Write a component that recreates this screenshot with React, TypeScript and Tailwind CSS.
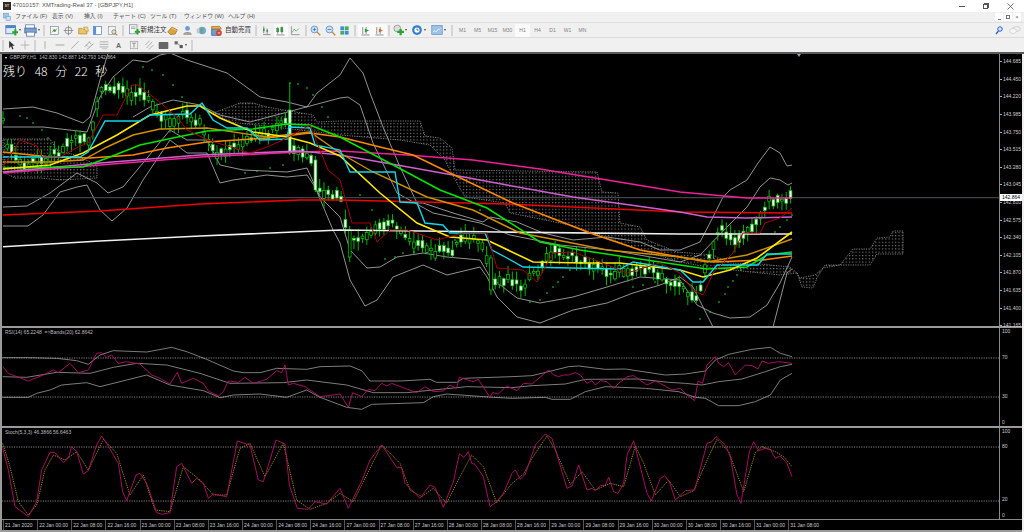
import React from "react";

type P = [number, number];
const s = (str: string): P[] =>
  str.trim().split(/\s+/).map((t) => {
    const [a, b] = t.split(",").map(Number);
    return [a, b] as P;
  });
const toStr = (p: P[]) => p.map(([x, y]) => `${x},${y}`).join(" ");
const z = (str: string, ox: number, oy: number): P[] => s(str).map(([x, y]) => [ox + x / 3, oy + y / 3] as P);

// ---------- main chart series (screen coordinates) ----------
const white = s("3,246.7 100,241 200,236 340,230 500,232 680,234 792,234");
const red = s("3,215 100,211 200,204 300,200 340,200 507,204 680,212 792,213");
const magenta = s("3,173 100,165 200,157 300,152 340,151 407,155 473,160 540,169 607,180 680,192 713,195 747,198 792,198");
const orchid = s("3,172 100,163 200,155 300,151 340,155 397,165 453,175 507,185 573,197 680,212 707,217 747,218 792,217");
const orange = s("3,152 50,157 90,158 133,155 167,148 207,142 267,138 310,133 340,137 380,147 413,155 450,173 513,203 590,233 640,250 680,257 713,262 763,260 792,256");
const darkOrange = s("3,162 50,162 83,160 107,147 133,135 160,129 207,128 267,137 310,132 340,153 373,172 427,197 473,210 520,233 557,240 607,250 680,257 707,262 747,255 792,239");
const green = s("3,168 83,167 110,157 140,145 173,138 207,131 253,129 287,124 310,125 340,137 397,167 440,190 487,208 540,242 580,250 633,258 680,265 707,269 747,267 767,255 792,252");
const yellow = s("3,169 50,165 83,153 117,135 150,115 187,106 200,106 220,118 253,132 287,137 310,143 340,156 380,193 417,223 450,237 487,240 533,262 583,263 620,263 680,270 703,277 730,270 757,258 792,232");
const cyan = s("3,157 80,157 88,152 105,121 140,121 150,115 190,114 202,103 213,120 227,128 247,128 260,140 287,139 289,127 310,128 315,145 340,150 350,172 395,172 400,202 417,203 425,223 443,225 450,233 485,233 492,250 507,258 523,267 620,269 633,262 680,270 693,282 703,282 717,265 758,265 767,254 792,254");
const darkRed = s("3,167 20,140 37,146 42,157 60,157 80,146 88,143 103,115 117,115 132,85 138,85 157,100 177,117 187,130 208,140 250,153 267,147 287,138 310,125 328,170 340,180 352,223 370,223 377,242 390,230 407,230 437,240 463,233 487,233 497,268 523,270 537,282 553,253 573,252 600,262 627,273 660,263 680,273 693,290 703,295 713,273 733,253 743,233 760,233 765,223 780,218 792,208");

const bands: P[][] = [
  s("3,109 33,107 57,113 83,123 90,117 100,80 108,53"),
  s("3,127 43,127 87,132 100,97 113,77 133,60 147,62 160,55 170,53 187,60 227,73 260,97 287,102 307,107 317,93 340,75 350,58 363,73 370,93 383,127 400,167 417,203 423,203 453,213 483,222 490,217 517,222 543,233 573,240 607,237 640,242 660,250 680,250 700,242 713,217 723,197 730,190 747,180 758,163 770,147 780,153 787,166 792,165"),
  s("133,117 150,107 173,100 200,105 220,115 250,122 340,98 348,97 360,105 373,143 397,193 433,213 480,223 510,235 560,245 610,250 680,262 700,255 727,227 747,207 760,187 770,178 780,180 788,185 792,183"),
  s("3,207 27,206 50,193 77,173 97,183 108,193 123,187 143,163 170,130 187,140 207,140 220,165 243,170 287,172 307,168 320,197 340,217 350,250 367,268 380,267 397,257 423,253 447,257 480,260 490,277 517,298 540,303 573,297 607,287 640,277 680,280 697,305 713,313 730,318 750,317 767,305 780,283 792,257"),
  s("3,226 28,226 43,215 60,192 77,187 87,185 100,210 112,221 127,208 143,180 170,140 187,153 207,153 220,183 233,180 267,175 287,177 307,175 315,187 333,230 340,243 350,280 365,306 377,300 393,277 423,265 447,275 480,267 487,277 497,297 517,317 540,323 573,310 607,303 633,293 660,285 680,277 693,287 713,327"),
  s("773,327 787,273 792,269"),
];

const anchors = s("3,123 7,143 12,152 23,167 40,160 57,153 73,137 90,140 100,90 107,90 118,90 127,93 140,93 148,100 160,113 173,123 182,113 200,123 208,143 217,157 230,147 253,140 277,130 288,117 293,150 310,157 315,177 320,193 340,197 350,243 363,240 373,232 387,220 403,232 417,245 433,252 453,250 463,235 480,242 488,267 493,283 510,277 520,287 537,273 553,250 587,263 613,273 643,267 673,282 690,293 697,302 707,263 720,225 732,242 743,233 758,223 767,200 792,198");
const lerp = (x: number) => {
  for (let i = 0; i < anchors.length - 1; i++) {
    const [a, b] = anchors[i];
    const [c, d] = anchors[i + 1];
    if (x >= a && x <= c) return b + ((d - b) * (x - a)) / (c - a);
  }
  return anchors[anchors.length - 1][1];
};
const rnd = (n: number) => {
  const v = Math.sin(n * 12.9898) * 43758.5453;
  return v - Math.floor(v);
};
const candles = Array.from({ length: 185 }, (_, i) => {
  const x = 3 + i * 4.28;
  const c = lerp(x) + (rnd(i) - 0.5) * 7;
  const h = 1.5 + rnd(i + 300) * 7;
  let top = c - h / 2;
  let bottom = c + h / 2;
  let wt = top - 1 - rnd(i + 600) * 9;
  let wb = bottom + 1 + rnd(i + 900) * 9;
  if (Math.abs(x - 288) < 2.2) { top = 110; bottom = 153; wt = 83; wb = 155; }
  if (Math.abs(x - 314) < 2.2) { top = 160; bottom = 190; wt = 156; wb = 192; }
  if (Math.abs(x - 348) < 2.2) { top = 230; bottom = 257; wt = 226; wb = 262; }
  if (Math.abs(x - 489) < 2.2) { top = 258; bottom = 290; wt = 255; wb = 295; }
  return { x, top, bottom, wt, wb, white: rnd(i + 1200) > 0.42 };
});

const sar = s("20,116 27,118 33,123 42,130 48,138 143,67 152,70 163,75 173,85 182,97 187,104 245,173 257,171 270,168 283,165 290,83 298,84 307,88 313,95 322,107 328,117 360,195 372,210 385,259 395,257 403,253 414,252 455,240 480,210 530,302 540,300 547,293 553,287 558,282 563,277 570,270 633,287 643,285 655,282 700,319 710,312 719,302 725,294 728,287 733,281 737,275 741,270 775,232 780,227 787,220 792,215");

const clouds = [
  "3,139 50,139 57,150 75,155 97,165 97,178 60,180 40,178 15,178 3,172",
  "213,113 240,103 253,103 267,107 313,115 317,122 340,121 400,121 420,121 425,136 440,138 452,148 455,170 597,172 602,192 618,193 620,223 640,227 647,240 677,252 713,255 730,263 760,264 790,267 797,273 780,275 713,268 680,262 640,250 600,235 570,225 510,213 505,203 465,197 455,180 445,160 430,145 400,140 340,135 300,130 230,122",
  "797,273 802,287 813,288 817,278 825,265 840,265 823,268 815,275 800,278",
  "840,265 853,249 870,249 877,238 890,237 893,231 903,231 903,254 877,254 870,265",
];

// ---------- sub windows ----------
const rsi = [
  ...z("8,140 25,160 85,183 130,165 160,150 175,158 210,130 235,158 265,150 290,100 305,98 320,112 335,105 355,130 380,125 420,132 455,165 480,175 510,192 532,157 545,190 580,175 610,190 625,213 655,228 670,215 685,183 715,187 735,172 760,190 800,178 830,152 845,158 855,135 865,195 880,190 915,200 960,230 1020,222 1045,262 1058,218 1085,230 1105,208 1125,212 1145,190 1160,198 1175,190 1215,205 1250,218 1275,200 1300,215 1330,213 1350,195 1370,205 1378,172 1420,185 1435,178 1470,232 1478,218 1495,222 1520,198 1536,205", 0, 320),
  ...z("15,212 35,190 60,192 110,150 125,165 140,170 155,165 170,165 190,158 205,165 225,190 240,182 250,195 265,182 285,185 305,205 320,190 345,170 365,167 405,195 430,183 445,190 480,210 505,205 525,225 548,242 558,183 572,190 585,135 610,110 620,130 635,140 650,128 670,165 700,135 720,137 738,147 750,123 770,130 800,125 840,130", 512, 320),
];
const rsiBands = [
  [...z("8,113 85,113 170,115 230,122 265,133 300,105 340,92 440,96 515,82 560,95 620,118 700,153 730,158 780,158 830,145 920,148 960,140 1050,138 1085,152 1110,183 1200,183 1290,178 1310,187 1370,187 1390,175 1536,170", 0, 320), ...z("60,167 170,140 200,138 280,148 340,147 460,165 520,162 580,153 610,120 650,103 720,88 775,82 805,100 840,110", 512, 320)],
  [...z("8,170 80,172 170,157 270,160 340,142 410,130 500,135 600,160 690,190 850,188 920,180 1040,195 1120,218 1220,218 1400,200 1536,203", 0, 320), ...z("60,197 160,192 220,178 380,177 470,187 520,190 570,195 620,185 690,177 760,155 805,140 840,133", 512, 320)],
  [...z("8,232 85,232 110,220 150,210 185,195 260,188 300,200 380,180 440,165 510,195 610,212 660,233 700,225 780,222 860,232 920,210 960,232 1040,262 1085,268 1115,253 1270,248 1300,230 1340,222 1480,232 1536,235", 0, 320), ...z("100,232 120,238 175,238 220,215 280,200 400,205 500,215 550,232 580,235 620,257 680,257 730,245 775,225 805,180 840,160", 512, 320)],
];
const stochK = [
  ...z("8,385 25,450 45,560 85,590 110,545 125,450 150,397 165,398 190,428 205,415 215,380 230,395 250,462 265,452 290,375 305,348 320,370 355,430 368,515 380,542 408,465 420,460 440,490 470,578 485,583 510,578 530,440 545,430 575,490 590,475 610,490 625,535 640,522 680,530 712,363 750,375 775,480 790,485 828,360 855,372 868,495 892,565 925,568 945,545 980,552 1020,505 1045,565 1085,483 1110,420 1145,375 1190,442 1205,443 1215,490 1260,535 1290,495 1305,502 1330,562 1360,485 1378,402 1392,412 1405,395 1415,430 1425,433 1450,470 1470,560 1490,545 1510,520 1536,460", 0, 320),
  ...z("10,450 25,478 40,462 70,375 100,342 120,355 165,505 180,498 200,435 225,510 240,505 250,512 265,497 280,495 290,472 305,515 318,520 335,490 345,405 365,362 405,520 418,543 445,475 458,467 472,485 490,540 520,512 548,510 585,370 600,365 612,350 640,375 655,410 675,525 687,550 712,395 725,365 740,392 760,385 775,388 790,415 805,408 825,430 840,470", 512, 320),
];
const stochD = [
  ...z("8,370 30,440 55,545 85,585 110,555 135,450 160,405 195,420 230,395 265,450 310,358 350,400 390,525 430,465 465,570 510,575 550,440 600,480 640,525 680,525 720,385 750,370 795,470 850,370 890,540 930,568 980,550 1020,520 1060,545 1100,465 1145,375 1200,430 1230,510 1265,530 1300,505 1340,550 1375,480 1415,405 1450,440 1490,548 1536,490", 0, 320),
  ...z("35,462 60,415 105,348 130,390 175,493 210,455 250,510 295,490 335,500 370,378 395,430 430,525 470,480 505,530 545,512 590,410 615,358 650,395 695,515 730,398 750,380 790,395 815,410 840,440", 512, 320),
];

const priceLabels = ["144.685", "144.450", "144.220", "143.985", "143.750", "143.515", "143.280", "143.045", "142.810", "142.575", "142.340", "142.105", "141.870", "141.635", "141.400", "141.165"];
const timeLabels = ["21 Jan 2020", "22 Jan 00:00", "22 Jan 08:00", "22 Jan 16:00", "23 Jan 00:00", "23 Jan 08:00", "23 Jan 16:00", "24 Jan 00:00", "24 Jan 08:00", "24 Jan 16:00", "27 Jan 00:00", "27 Jan 08:00", "27 Jan 16:00", "28 Jan 00:00", "28 Jan 08:00", "28 Jan 16:00", "29 Jan 00:00", "29 Jan 08:00", "29 Jan 16:00", "30 Jan 00:00", "30 Jan 08:00", "30 Jan 16:00", "31 Jan 00:00", "31 Jan 08:00"];

// ---------- icons ----------
const Ic = ({ children, w = 11 }: { children: React.ReactNode; w?: number }) => (
  <svg width={w} height={w} viewBox="0 0 16 16" className="shrink-0">{children}</svg>
);
const Arrow = () => <span className="ml-[1px] h-0 w-0 border-x-[1.5px] border-t-[2px] border-x-transparent border-t-[#444]" />;
const Plus = ({ c = "#22a82a" }: { c?: string }) => <path d="M9 9h2.5V6.5h2.5V9H16.500v2.500H14V14h-2.500v-2.500H9z" fill={c} />;
const NewChart = () => <Ic w={13}><rect x="1" y="2" width="12" height="10" fill="#dfe8f5" stroke="#4a78b5" /><rect x="1" y="2" width="12" height="3" fill="#4a86c8" /><Plus /></Ic>;
const Profile = () => <Ic w={13}><rect x="2" y="1" width="11" height="5" fill="#fff" stroke="#5b7fb0" /><rect x="1" y="5" width="14" height="6" fill="#7ea2d0" stroke="#49699a" /><rect x="3" y="10" width="10" height="5" fill="#fff" stroke="#5b7fb0" /></Ic>;
const Props = () => <Ic><rect x="2" y="2" width="12" height="12" fill="#f6f6f6" stroke="#7b8ca8" /><path d="M4 11l3-4 2 2 3-4" stroke="#c83" fill="none" /><circle cx="8" cy="8" r="2" fill="#3a9a52" /></Ic>;
const Cross = () => <Ic><circle cx="8" cy="8" r="5" fill="none" stroke="#777" /><path d="M8 1v14M1 8h14" stroke="#777" /></Ic>;
const Folder = () => <Ic><path d="M1 5h5l1 1h6v7H1z" fill="#edc660" stroke="#a9863a" /><path d="M8 3h6l1 6h-4z" fill="#f5dc90" stroke="#b39550" /></Ic>;
const Win = () => <Ic><rect x="2" y="2" width="12" height="12" fill="#fff" stroke="#4a78b5" /><rect x="2" y="2" width="4" height="12" fill="#5c90d0" /></Ic>;
const Print = () => <Ic><rect x="2" y="2" width="10" height="12" fill="#f4f4f4" stroke="#999" /><circle cx="10" cy="10" r="3" fill="#e9e4c0" stroke="#667" /><path d="M12 12l3 3" stroke="#b08030" strokeWidth="1.500" /></Ic>;
const Order = () => <Ic w={12}><rect x="2" y="1" width="10" height="12" fill="#f6f6f6" stroke="#7e8a99" /><path d="M4 4h6M4 6h6" stroke="#8a99aa" /><Plus /></Ic>;
const Gold = () => <Ic><path d="M1 10l6-7 8 4-3 6-7 1z" fill="#d9a53f" stroke="#9b6f20" /><path d="M6 4l8 4" stroke="#f5d682" /></Ic>;
const People = () => <Ic><circle cx="8" cy="5" r="3.500" fill="#6a9ad8" /><path d="M2 13c0-4 12-4 12 0v1H2z" fill="#6a9ad8" /><rect x="3" y="12" width="10" height="2" fill="#d6a050" /></Ic>;
const Globe = () => <Ic><circle cx="9" cy="8" r="5.500" fill="#6fa8c8" /><path d="M7 4l3 2-2 3 2 3-3-1z" fill="#5ca060" /><rect x="1" y="5" width="4" height="7" fill="#c5c9ce" /></Ic>;
const Expert = () => <Ic w={13}><path d="M2 6h10v8H2z" fill="#6f9ccc" stroke="#44709e" /><path d="M2 3h10l2 3H2z" fill="#e8b14c" stroke="#a9781f" /><circle cx="11" cy="11" r="3.500" fill="#d63c30" /><path d="M9.500 11h3" stroke="#fff" /></Ic>;
const Bars = ({ c = "#3a8a52" }: { c?: string }) => <Ic><path d="M4 2v10M9 5v8M3 14h11" stroke="#666" /><rect x="3" y="5" width="2.200" height="4" fill={c} /><rect x="8" y="7" width="2.200" height="3" fill={c} /></Ic>;
const Candle = () => <Ic><path d="M4 3v10M10 2v11M2 14.500h12" stroke="#666" /><rect x="2.500" y="5" width="3" height="5" fill="#2f9c40" stroke="#1e6e2e" strokeWidth=".5" /><rect x="8.500" y="4" width="3" height="6" fill="#2f9c40" stroke="#1e6e2e" strokeWidth=".5" /></Ic>;
const LineC = () => <Ic><path d="M2 2v12h12" stroke="#777" fill="none" /><path d="M3 11l3-5 3 3 4-4" stroke="#3c9a66" fill="none" /></Ic>;
const ZoomI = ({ plus }: { plus?: boolean }) => <Ic><circle cx="6.500" cy="6.500" r="5" fill="#c9e0f5" stroke="#4d7fb4" /><path d="M10 10l5 5" stroke="#c08a30" strokeWidth="2" /><path d={plus ? "M4 6.500h5M6.500 4v5" : "M4 6.500h5"} stroke="#2c6fb0" /></Ic>;
const Tile = () => <Ic><rect x="2" y="2" width="5.500" height="5.500" fill="#3c8ed8" /><rect x="8.500" y="2" width="5.500" height="5.500" fill="#46ab5e" /><rect x="2" y="8.500" width="5.500" height="5.500" fill="#46ab5e" /><rect x="8.500" y="8.500" width="5.500" height="5.500" fill="#3c8ed8" /></Ic>;
const BarPlay = ({ c }: { c: string }) => <Ic><path d="M4 3v10M9 3v10M2 14.500h12" stroke="#666" /><path d="M7 5l6 3-6 3z" fill={c} /></Ic>;
const Ind = () => <Ic w={12}><circle cx="7" cy="6" r="4.500" fill="#ddd" stroke="#888" /><path d="M7 9h3V6.500h3V9h3v3h-3v3h-3v-3H7z" fill="#22a82a" /></Ic>;
const Clock = () => <Ic w={12}><circle cx="8" cy="8" r="6.500" fill="#2f7fd0" /><circle cx="8" cy="8" r="3.500" fill="#fff" /><path d="M8 6v2h2" stroke="#333" fill="none" /></Ic>;
const Tmpl = () => <Ic w={12}><rect x="1" y="2" width="14" height="12" fill="#9cc2ea" stroke="#6d95c6" /><path d="M3 11c2-5 3 2 5-2s3 0 5-3" stroke="#fff" fill="none" /></Ic>;
const Pointer = () => <Ic w={10}><path d="M5 1v12l3-3 2 5 2-1-2-5h4z" fill="#333" /></Ic>;
const CrossT = () => <Ic w={10}><path d="M8 1v14M1 8h14" stroke="#999" /></Ic>;
const VLine = () => <Ic w={10}><path d="M8 2v12" stroke="#888" /></Ic>;
const HLine = () => <Ic w={10}><path d="M1 8h14" stroke="#777" /></Ic>;
const Trend = () => <Ic w={10}><path d="M2 14L14 2" stroke="#888" /></Ic>;
const Channel = () => <Ic w={10}><path d="M1 11L10 2M5 15l10-9" stroke="#777" /><path d="M3 7l4 4M8 3l4 4" stroke="#999" /></Ic>;
const Fib = () => <Ic w={10}><path d="M1 3h14M1 7h14M1 11h14" stroke="#888" /><path d="M5 14h8" stroke="#aaa" /></Ic>;
const TBox = () => <Ic w={10}><rect x="2" y="2" width="12" height="12" fill="#eee" stroke="#999" /><path d="M5 5h6M8 5v7" stroke="#666" /></Ic>;
const Arrows = () => <Ic w={10}><path d="M2 8L9 1M4 13L13 3M8 15l7-7" stroke="#888" /></Ic>;
const RectI = () => <Ic w={11}><rect x="1" y="3" width="14" height="10" rx="1" fill="#666" /></Ic>;
const Shapes = () => <Ic w={10}><rect x="1" y="2" width="5" height="5" fill="#666" /><rect x="9" y="8" width="5" height="5" fill="#555" /><path d="M6 6l4 3" stroke="#555" /></Ic>;

const Sep = ({ w = 6 }: { w?: number }) => (
  <div className="flex h-full shrink-0 items-center justify-center" style={{ width: w }}>
    <div className="h-[11px] w-[2px] bg-[#d4d4d4]" />
  </div>
);
const B = ({ children, w = 14.5, active }: { children: React.ReactNode; w?: number; active?: boolean }) => (
  <div className={`flex h-[13px] shrink-0 items-center justify-center ${active ? "bg-[#fafafa]" : ""}`} style={{ width: w }}>
    {children}
  </div>
);

const jp = "font-['Liberation_Sans','Noto_Sans_CJK_JP',sans-serif]";

export default function App() {
  const menu: [string, number][] = [
    ["ファイル (F)", 27], ["表示 (V)", 22], ["挿入 (I)", 19], ["チャート (C)", 27], ["ツール (T)", 24], ["ウィンドウ (W)", 34], ["ヘルプ (H)", 26],
  ];
  const mas: [P[], string, number][] = [
    [white, "#f0f0f0", 1.6], [red, "#f00000", 1.6], [magenta, "#f0209a", 1.6], [orchid, "#d060d0", 1.5], [orange, "#ff8800", 1.6], [darkOrange, "#d09000", 1.4], [green, "#00e800", 1.5], [yellow, "#ffe800", 1.6], [cyan, "#10d8e8", 1.4], [darkRed, "#a80000", 1],
  ];
  return (
    <div className={`flex h-[532px] w-[1024px] flex-col overflow-hidden bg-[#f0f0f0] ${jp} text-[6px] leading-none text-[#444]`}>
      {/* title bar */}
      <div className="flex h-[12px] shrink-0 items-center bg-white pl-[3px]">
        <div className="flex h-[8px] w-[8px] items-center justify-center bg-[#2a2a2a] text-[3px] font-bold text-[#e8c070]">MT</div>
        <span className="ml-[1.500px] text-[5.900px] text-[#555]">47010157: XMTrading-Real 37 - [GBPJPY,H1]</span>
        <div className="ml-auto flex items-center">
          <div className="h-[1px] w-[6px] bg-[#555]" />
          <div className="relative ml-[18px] h-[5px] w-[5px] border border-[#555] after:absolute after:-right-[2px] after:-top-[2px] after:h-[5px] after:w-[5px] after:border-r after:border-t after:border-[#555]" />
          <svg width="7" height="7" viewBox="0 0 7 7" className="ml-[19px] mr-[10px]"><path d="M0.500 0.500l6 6M6.500 0.500l-6 6" stroke="#555" strokeWidth=".8" /></svg>
        </div>
      </div>
      {/* menu */}
      <div className="flex h-[11px] shrink-0 items-center border-b border-[#e0e0e0]">
        <svg width="8" height="8" viewBox="0 0 16 16" className="ml-[3px] mr-[4px]"><rect x="1" y="1" width="10" height="9" fill="#a6c4e8" stroke="#5a8bc5" /><rect x="6" y="7" width="9" height="8" fill="#cfe0f5" stroke="#5a8bc5" /></svg>
        <div className="flex gap-[10px] text-[5.800px] text-[#555]">
          {menu.map(([t, w]) => (
            <span key={t} className="whitespace-nowrap" style={{ width: w }}>{t}</span>
          ))}
        </div>
        <div className="ml-auto mr-[3px] flex gap-[1px]">
          <div className="flex h-[8px] w-[8px] items-end justify-center bg-white pb-[1px]"><div className="h-px w-[3px] bg-[#777]" /></div>
          <div className="flex h-[8px] w-[8px] items-center justify-center bg-white"><div className="h-[4px] w-[4px] border border-[#777]" /></div>
          <div className="flex h-[8px] w-[8px] items-center justify-center bg-white text-[6px] text-[#777]">×</div>
        </div>
      </div>
      {/* toolbar 1 */}
      <div className="flex h-[15px] shrink-0 items-center border-b border-[#dcdcdc] pl-[3px]">
        <B w={19}><NewChart /><Arrow /></B>
        <B w={19}><Profile /><Arrow /></B>
        <Sep w={6} />
        <B><Props /></B><B><Cross /></B><B><Folder /></B><B><Win /></B><B><Print /></B>
        <Sep w={6} />
        <div className="flex h-[13px] w-[40px] shrink-0 items-center gap-[1px] pl-[2px] text-[6.500px] text-[#333]"><Order /><span className="whitespace-nowrap">新規注文</span></div>
        <B><Gold /></B><B><People /></B><B><Globe /></B>
        <div className="flex h-[13px] w-[44px] shrink-0 items-center gap-[2px] pl-[1px] text-[6.500px] text-[#333]"><Expert /><span className="whitespace-nowrap">自動売買</span></div>
        <Sep w={6} />
        <B><Bars /></B><B active><Candle /></B><B><LineC /></B>
        <Sep w={6} />
        <B><ZoomI plus /></B><B><ZoomI /></B><B><Tile /></B>
        <Sep w={6} />
        <B active><BarPlay c="#2f9c40" /></B><B active><BarPlay c="#d06a30" /></B>
        <Sep w={3} />
        <B w={18}><Ind /><Arrow /></B><B w={20}><Clock /><Arrow /></B><B w={20}><Tmpl /><Arrow /></B>
        <Sep w={7} />
        <div className="flex text-[5px] text-[#808080]">
          {["M1", "M5", "M15", "M30", "H1", "H4", "D1", "W1", "MN"].map((t) => (
            <div key={t} className={`flex h-[13px] w-[15px] items-center justify-center ${t === "H1" ? "bg-[#fafafa]" : ""}`}>{t}</div>
          ))}
        </div>
        <div className="ml-auto mr-[3px] flex items-center gap-[6px]">
          <svg width="8" height="9" viewBox="0 0 16 18"><circle cx="10" cy="6" r="4.500" fill="#dbe8fa" stroke="#2a60c8" strokeWidth="2" /><path d="M7 10l-5 6" stroke="#2a60c8" strokeWidth="2.500" /></svg>
          <svg width="12" height="9" viewBox="0 0 24 18"><ellipse cx="15" cy="6" rx="8" ry="5" fill="#eee" stroke="#bbb" /><ellipse cx="8" cy="10" rx="7" ry="5" fill="#f6f6f6" stroke="#bbb" /></svg>
        </div>
      </div>
      {/* toolbar 2 */}
      <div className="flex h-[14px] shrink-0 items-center pl-[1px]">
        <Sep w={4} />
        <B w={12}><Pointer /></B>
        <B w={16}><CrossT /></B>
        <Sep w={4} />
        <B w={15}><VLine /></B><B w={15}><HLine /></B><B w={15}><Trend /></B><B w={14}><Channel /></B><B w={15}><Fib /></B>
        <B w={15}><span className="text-[7px] font-bold text-[#666]">A</span></B>
        <B w={15}><TBox /></B><B w={15}><Arrows /></B><B w={14}><RectI /></B>
        <B w={20}><Shapes /><Arrow /></B>
        <Sep w={4} />
      </div>
      {/* chart window */}
      <div className="flex min-h-0 flex-1 flex-col">
        <div className="h-[2px] shrink-0 bg-[#5a5a5a]" />
        <div className="flex h-[478px] shrink-0 pr-[2px]">
          <div className="w-[2px] shrink-0 bg-[#9a9a9a]" />
          <div className="flex min-w-0 flex-1 flex-col">
            {/* main */}
            <div className="relative flex h-[272px] shrink-0 bg-black">
              <svg width="997" height="272" viewBox="2 54 997 272" className="shrink-0">
                <defs>
                  <pattern id="dots" width="3.300" height="3.300" patternUnits="userSpaceOnUse">
                    <rect x="1" y="1" width="0.900" height="0.900" fill="#c8c8c8" />
                  </pattern>
                </defs>
                {clouds.map((c, i) => (
                  <polygon key={i} points={c} fill="url(#dots)" stroke="#aaa" strokeWidth=".7" strokeDasharray="1.200 1.200" />
                ))}
                {bands.map((b, i) => (
                  <polyline key={i} points={toStr(b)} fill="none" stroke="#b8b8b8" strokeWidth=".8" />
                ))}
                <line x1="2" y1="197.700" x2="999" y2="197.700" stroke="#4c565c" strokeWidth="1" />
                {candles.map((c, i) => (
                  <g key={i}>
                    <line x1={c.x} x2={c.x} y1={c.wt} y2={c.wb} stroke="#00b800" strokeWidth="1" />
                    <rect x={c.x - 1.400} y={c.top} width="2.800" height={c.bottom - c.top} fill={c.white ? "#fff" : "#000"} stroke="#00d000" strokeWidth=".7" />
                  </g>
                ))}
                {sar.map(([x, y], i) => (
                  <rect key={i} x={x - 0.700} y={y - 0.700} width="1.400" height="1.400" fill="#10e010" />
                ))}
                {mas.map(([p, c, w], i) => (
                  <polyline key={i} points={toStr(p)} fill="none" stroke={c} strokeWidth={w} />
                ))}
              </svg>
              <div className="flex w-[23px] shrink-0 flex-col border-l border-[#8a8a8a] text-[#ccc]">
                <div className="-mt-[1px]">
                  {priceLabels.map((p) => (
                    <div key={p} className="flex h-[17.600px] items-center">
                      <div className="h-px w-[2px] bg-[#aaa]" />
                      <span className="ml-[1px] text-[5px]">{p}</span>
                    </div>
                  ))}
                </div>
              </div>
              {/* overlays */}
              <div className="absolute left-[3px] top-[1px] flex items-center gap-[1.500px] text-[5px] text-[#bdbdbd]">
                <span className="h-0 w-0 border-x-[1.500px] border-t-[2px] border-x-transparent border-t-white" />
                <span className="ml-[1px] whitespace-nowrap">GBPJPY,H1&nbsp; 142.830 142.887 142.793 142.864</span>
              </div>
              <div className="absolute left-[1px] top-[11px] whitespace-nowrap font-['Noto_Sans_CJK_JP',sans-serif] text-[12px] font-light text-white [word-spacing:5px]">残り 48 分 22 秒</div>
              <div className="absolute left-[795px] top-0 h-0 w-0 border-x-[2px] border-t-[3px] border-x-transparent border-t-[#8fa0b5]" />
              <div className="absolute left-[998px] top-[140px] flex h-[7px] w-[22px] items-center justify-center bg-white text-[5px] text-black">142.864</div>
            </div>
            <div className="h-[2px] shrink-0 bg-[#9a9a9a]" />
            {/* RSI */}
            <div className="relative flex h-[98px] shrink-0 bg-black">
              <svg width="997" height="98" viewBox="2 328 997 98" className="shrink-0">
                <line x1="2" x2="999" y1="358" y2="358" stroke="#bbb" strokeWidth=".7" strokeDasharray="1.200 1.200" />
                <line x1="2" x2="999" y1="397" y2="397" stroke="#bbb" strokeWidth=".7" strokeDasharray="1.200 1.200" />
                {rsiBands.map((b, i) => (
                  <polyline key={i} points={toStr(b)} fill="none" stroke="#b0b0b0" strokeWidth=".7" />
                ))}
                <polyline points={toStr(rsi)} fill="none" stroke="#b8106a" strokeWidth=".9" />
              </svg>
              <div className="flex w-[23px] shrink-0 flex-col border-l border-[#8a8a8a] text-[5px] text-[#ccc]">
                {[["100", "mt-0"], ["70", "mt-[18px]"], ["30", "mt-[31px]"], ["0", "mt-[18px]"]].map(([t, m]) => (
                  <div key={t} className={`flex h-[8px] items-center pl-[2px] ${m}`}>{t}</div>
                ))}
              </div>
              <div className="absolute left-[3px] top-[2px] whitespace-nowrap text-[5px] text-[#bdbdbd]">RSI(14) 65.2248&nbsp; =&gt;Bands(20) 62.8642</div>
            </div>
            <div className="h-[2px] shrink-0 bg-[#9a9a9a]" />
            {/* Stoch */}
            <div className="relative flex h-[91px] shrink-0 bg-black">
              <svg width="997" height="91" viewBox="2 428 997 91" className="shrink-0">
                <line x1="2" x2="999" y1="447" y2="447" stroke="#bbb" strokeWidth=".7" strokeDasharray="1.200 1.200" />
                <line x1="2" x2="999" y1="501" y2="501" stroke="#bbb" strokeWidth=".7" strokeDasharray="1.200 1.200" />
                <polyline points={toStr(stochD)} fill="none" stroke="#c0a800" strokeWidth=".8" strokeDasharray="1.300 1" />
                <polyline points={toStr(stochK)} fill="none" stroke="#b8106a" strokeWidth=".9" />
              </svg>
              <div className="flex w-[23px] shrink-0 flex-col border-l border-[#8a8a8a] text-[5px] text-[#ccc]">
                {[["100", "mt-0"], ["80", "mt-[7px]"], ["20", "mt-[46px]"], ["0", "mt-[8px]"]].map(([t, m]) => (
                  <div key={t} className={`flex h-[8px] items-center pl-[2px] ${m}`}>{t}</div>
                ))}
              </div>
              <div className="absolute left-[3px] top-[2px] whitespace-nowrap text-[5px] text-[#bdbdbd]">Stoch(5,3,3) 46.3866 56.6463</div>
            </div>
            {/* time axis */}
            <div className="flex h-[11px] shrink-0 border-t border-[#8a8a8a] bg-black pl-[1px] text-[5px] text-[#ccc]">
              {timeLabels.map((t) => (
                <div key={t} className="relative flex h-full w-[34.150px] shrink-0 items-center whitespace-nowrap border-l border-l-[#555] pl-[1px]">{t}</div>
              ))}
            </div>
            <div className="min-h-0 flex-1 bg-[#9a9a9a]" />
          </div>
        </div>
      </div>
    </div>
  );
}
